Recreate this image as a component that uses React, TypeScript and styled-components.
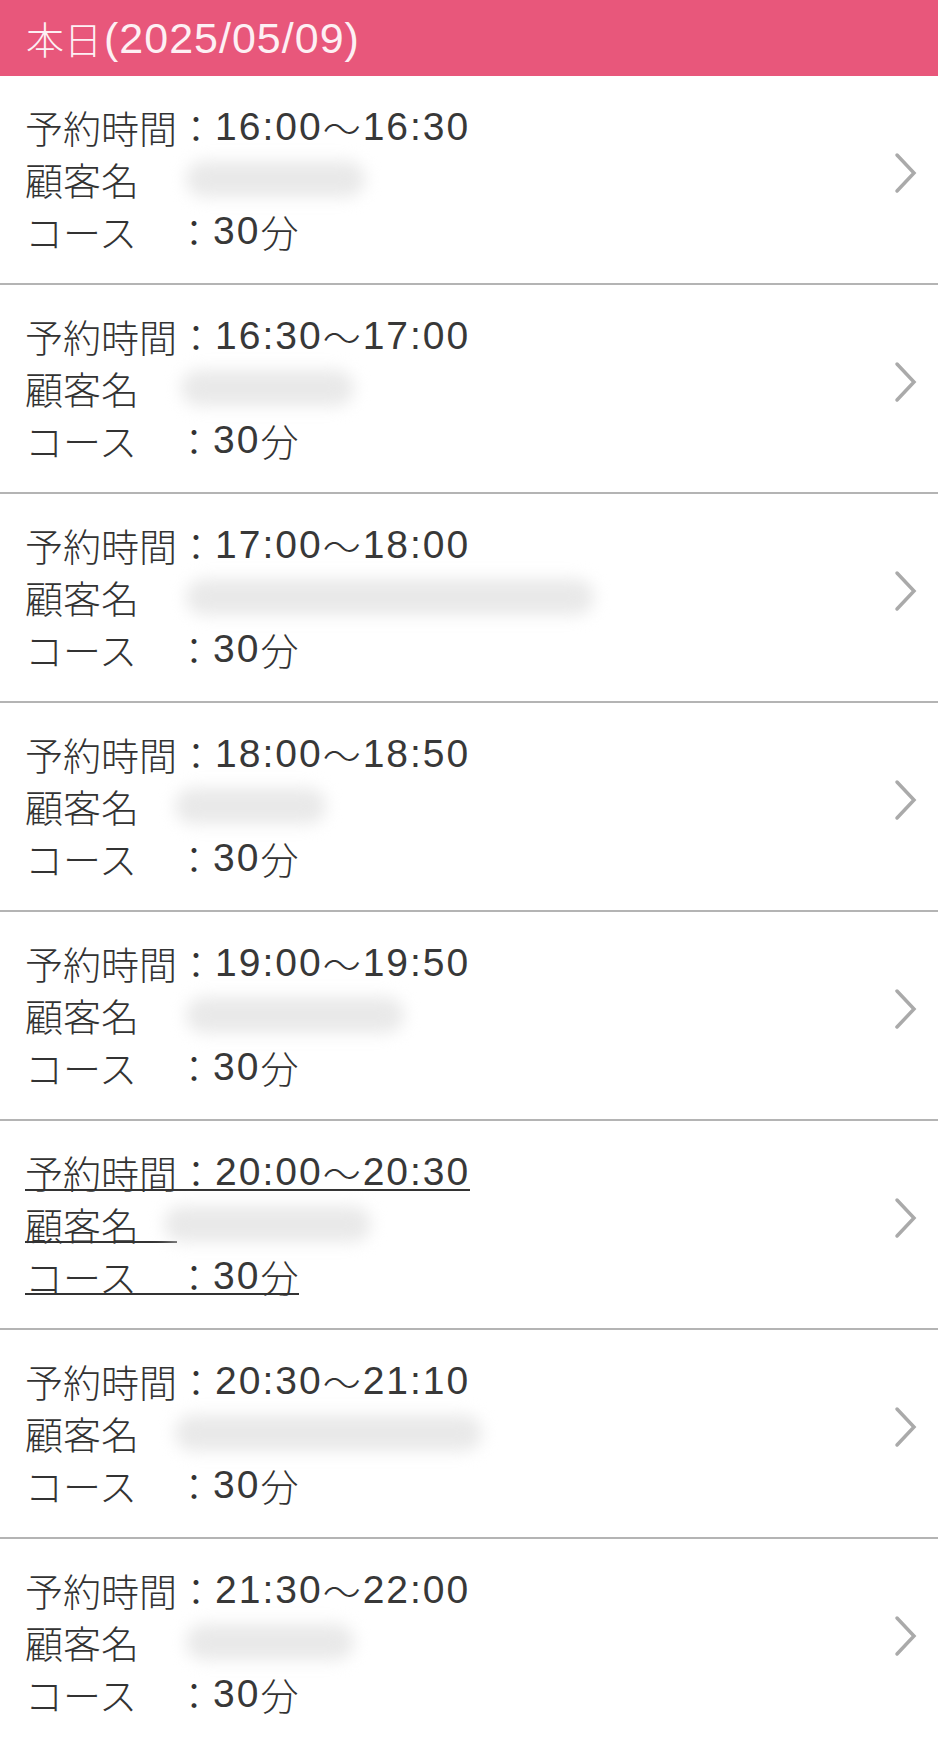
import React from "react";
import styled, { createGlobalStyle, css } from "styled-components";

const GlobalStyle = createGlobalStyle`
  html, body {
    margin: 0;
    padding: 0;
    background: #ffffff;
  }
  body {
    font-family: "Noto Sans CJK JP", "Noto Sans", sans-serif;
    color: #333333;
  }
`;

const Page = styled.div`
  width: 938px;
  display: flex;
  flex-direction: column;
  background: #ffffff;
`;

const Header = styled.div`
  height: 76px;
  background: #e8577b;
  color: #fdf0f4;
  display: flex;
  align-items: center;
  padding-left: 26px;
  font-size: 38px;
  font-weight: 300;
  line-height: 1;
  white-space: pre;
`;

const HeaderNum = styled.span`
  font-family: "Liberation Sans", Arial, sans-serif;
  font-size: 43px;
  font-weight: 400;
  letter-spacing: 1px;
  margin-left: 2px;
`;

const List = styled.ul`
  list-style: none;
  margin: 0;
  padding: 0;
`;

const Row = styled.li`
  display: flex;
  align-items: center;
  justify-content: space-between;
  padding: 25px 20px 26px 25px;
  border-bottom: 2px solid #b4b4b4;
`;

const Info = styled.div`
  display: flex;
  flex-direction: column;
  align-items: flex-start;
  font-size: 38px;
  font-weight: 300;
  line-height: 52px;
  color: #333333;
`;

const underlineCss = css`
  background-image: linear-gradient(#333333, #333333);
  background-repeat: no-repeat;
  background-size: 100% 2px;
  background-position: 0 calc(100% - 7px);
`;

const Line = styled.div<{ $underline?: boolean }>`
  display: flex;
  align-items: center;
  white-space: pre;
  ${(p) => p.$underline && underlineCss}
`;

const Label = styled.span<{ $underline?: boolean }>`
  ${(p) => p.$underline && underlineCss}
`;

const Num = styled.span`
  font-family: "Liberation Sans", Arial, sans-serif;
  font-size: 39px;
  font-weight: 400;
  letter-spacing: 2px;
  color: #383838;
`;

const Wave = styled.span`
  font-size: 38px;
  letter-spacing: 2px;
`;

const NameBlur = styled.span`
  display: inline-block;
  height: 36px;
  border-radius: 18px;
  background: #e9e9e9;
  filter: blur(8px);
`;

const Chevron = styled.svg`
  flex: none;
  width: 24px;
  height: 42px;
  margin-bottom: 12px;
`;

type Reservation = {
  start: string;
  end: string;
  nameStart: number;
  nameEnd: number;
  underline?: boolean;
};

const data: Reservation[] = [
  { start: "16:00", end: "16:30", nameStart: 178, nameEnd: 373 },
  { start: "16:30", end: "17:00", nameStart: 173, nameEnd: 362 },
  { start: "17:00", end: "18:00", nameStart: 178, nameEnd: 602 },
  { start: "18:00", end: "18:50", nameStart: 167, nameEnd: 334 },
  { start: "19:00", end: "19:50", nameStart: 178, nameEnd: 412 },
  { start: "20:00", end: "20:30", nameStart: 156, nameEnd: 379, underline: true },
  { start: "20:30", end: "21:10", nameStart: 167, nameEnd: 490 },
  { start: "21:30", end: "22:00", nameStart: 178, nameEnd: 362 },
];

const LABEL_END = 177;
const BLUR = 8;

export default function App() {
  return (
    <Page>
      <GlobalStyle />
      <Header>
        本日<HeaderNum>(2025/05/09)</HeaderNum>
      </Header>
      <List>
        {data.map((r) => (
          <Row key={r.start}>
            <Info>
              <Line $underline={r.underline}>
                {"予約時間："}
                <Num>{r.start}</Num>
                <Wave>〜</Wave>
                <Num>{r.end}</Num>
              </Line>
              <Line>
                <Label $underline={r.underline}>{"顧客名\u3000"}</Label>
                <NameBlur
                  style={{
                    width: r.nameEnd - r.nameStart - BLUR * 2,
                    marginLeft: r.nameStart - LABEL_END + BLUR,
                  }}
                />
              </Line>
              <Line $underline={r.underline}>
                {"コース\u3000："}
                <Num>30</Num>
                {"分"}
              </Line>
            </Info>
            <Chevron viewBox="0 0 24 42">
              <polyline
                points="3,3 20,21 3,39"
                fill="none"
                stroke="#aaaaaa"
                strokeWidth="3.5"
                strokeLinecap="round"
                strokeLinejoin="miter"
              />
            </Chevron>
          </Row>
        ))}
      </List>
    </Page>
  );
}
